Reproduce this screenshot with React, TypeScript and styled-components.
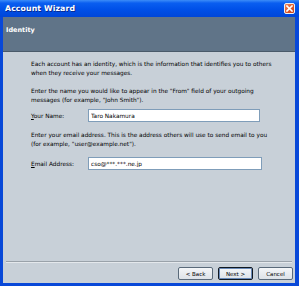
import styled, { createGlobalStyle } from "styled-components";

const GlobalStyle = createGlobalStyle`
	html, body {
		margin: 0;
		padding: 0;
		background: #c8d0d8;
	}
	body {
		font-family: Tahoma, "DejaVu Sans", "Liberation Sans", sans-serif;
	}
`;

interface FieldProps {
	label: string;
	hotkey: string;
	value: string;
	width: number;
	top: number;
}

function Field({ label, hotkey, value, width, top }: FieldProps) {
	const rest = label.slice(hotkey.length);
	return (
		<FieldRow $top={top}>
			<FieldLabel>
				<u>{hotkey}</u>
				{rest}
			</FieldLabel>
			<TextInput readOnly value={value} $width={width} />
		</FieldRow>
	);
}

export default function App() {
	return (
		<>
			<GlobalStyle />
			<Window>
				<TitleBar>
					<Title>Account Wizard</Title>
					<CloseButton>
						<svg width="7" height="7" viewBox="0 0 7 7">
							<path d="M1 1 L6 6 M6 1 L1 6" stroke="#fff" strokeWidth="1.6" strokeLinecap="square" />
						</svg>
					</CloseButton>
				</TitleBar>

				<Frame>
					<Header>Identity</Header>

					<Body>
						<Paragraph>
							Each account has an identity, which is the information that identifies you to others
							<br />
							when they receive your messages.
						</Paragraph>

						<Paragraph>
							Enter the name you would like to appear in the "From" field of your outgoing
							<br />
							messages (for example, "John Smith").
						</Paragraph>

						<Field label="Your Name:" hotkey="Y" value="Taro Nakamura" width={172} top={-5} />

						<Paragraph>
							Enter your email address. This is the address others will use to send email to you
							<br />
							(for example, "user@example.net").
						</Paragraph>

						<Field label="Email Address:" hotkey="E" value="cso@***.***.ne.jp" width={174} top={-1} />
					</Body>

					<Separator />

					<ButtonRow>
						<Button>&lt; Back</Button>
						<Button $primary>Next &gt;</Button>
						<Button>Cancel</Button>
					</ButtonRow>
				</Frame>
			</Window>
		</>
	);
}

const Window = styled.div`
	width: 299px;
	height: 286px;
	display: flex;
	flex-direction: column;
	background: #0848d8;
	overflow: hidden;
`;

const TitleBar = styled.div`
	height: 17px;
	flex-shrink: 0;
	display: flex;
	align-items: center;
	justify-content: space-between;
	padding: 0 4px 0 5px;
	box-sizing: border-box;
	background: linear-gradient(to bottom, #3c8cf8 0%, #0a5ef0 18%, #0050e8 55%, #0046d8 100%);
`;

const Title = styled.span`
	color: #fff;
	font-weight: bold;
	font-size: 7.8px;
	letter-spacing: 0.1px;
	text-shadow: 1px 1px 0 #0a2a90;
`;

const CloseButton = styled.div`
	width: 11px;
	height: 11px;
	box-sizing: border-box;
	display: flex;
	align-items: center;
	justify-content: center;
	border: 1px solid #f0f0f0;
	border-radius: 2px;
	background: linear-gradient(135deg, #f08a60 0%, #e05a2a 50%, #c8401a 100%);
`;

const Frame = styled.div`
	flex: 1;
	display: flex;
	flex-direction: column;
	margin: 0 4px 3px 3px;
	background: #c8d0d8;
`;

const Header = styled.div`
	height: 35px;
	box-sizing: border-box;
	padding: 9px 0 0 3px;
	background: #607488;
	color: #fff;
	font-weight: bold;
	font-size: 6.5px;
	border-bottom: 1px solid #4a5a6a;
`;

const Body = styled.div`
	flex: 1;
	display: flex;
	flex-direction: column;
	padding: 8px 0 0 28px;
	gap: 9px;
	font-size: 5.8px;
	color: #000;
`;

const Paragraph = styled.p`
	margin: 0;
	line-height: 9px;
`;

const FieldRow = styled.div<{ $top: number }>`
	display: flex;
	align-items: center;
	margin-top: ${(p) => p.$top}px;
`;

const FieldLabel = styled.label`
	width: 57px;
	flex-shrink: 0;

	u {
		text-decoration: underline;
	}
`;

const TextInput = styled.input<{ $width: number }>`
	width: ${(p) => p.$width}px;
	height: 13px;
	box-sizing: border-box;
	padding: 0 2px;
	border: 1px solid #7f9db9;
	background: #fff;
	font-family: inherit;
	font-size: 5.8px;
	color: #000;
	outline: none;
`;

const Separator = styled.div`
	height: 1px;
	margin: 0 3px 0 3px;
	background: #9aa2aa;
	border-bottom: 1px solid #e4e8ec;
`;

const ButtonRow = styled.div`
	display: flex;
	justify-content: flex-end;
	gap: 5px;
	padding: 4px 2px 3px 0;
`;

const Button = styled.button<{ $primary?: boolean }>`
	width: 35px;
	height: 13px;
	padding: 0;
	box-sizing: border-box;
	font-family: inherit;
	font-size: 5.5px;
	color: #000;
	border-radius: 2px;
	background: linear-gradient(to bottom, #f4f6f8, #dde2e8);
	border: 1px solid ${(p) => (p.$primary ? "#101820" : "#5a6a7a")};
	box-shadow: ${(p) => (p.$primary ? "inset 0 0 0 1px #6a8ab8" : "none")};
`;
